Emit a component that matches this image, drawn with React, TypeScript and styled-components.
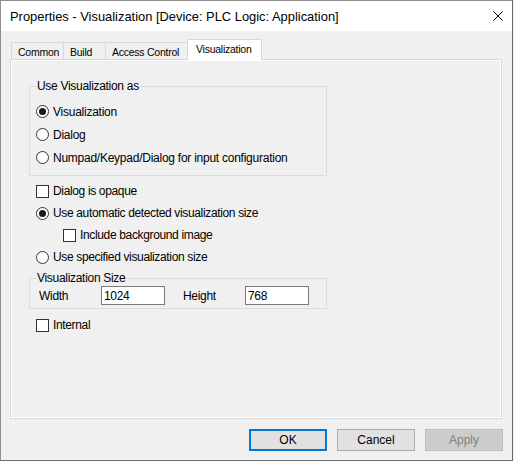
import React from 'react';
import styled, { createGlobalStyle } from 'styled-components';

const Global = createGlobalStyle`
  html, body { margin: 0; padding: 0; background: #f0f0f0; }
  body {
    font-family: "Liberation Sans", Arial, sans-serif;
    font-size: 12px;
    color: #000;
  }
  * { box-sizing: border-box; }
`;

const Window = styled.div`
  width: 513px;
  height: 461px;
  border: 1px solid #8f8f8f;
  border-right-color: #6b6b6b;
  border-bottom-color: #6b6b6b;
  background: #f0f0f0;
  display: flex;
  flex-direction: column;
`;

const TitleBar = styled.div`
  height: 30px;
  background: #fff;
  display: flex;
  align-items: center;
  justify-content: space-between;
  padding: 0 9px 0 9px;
  flex: none;
`;

const Title = styled.span`
  font-size: 12.9px;
  padding-top: 1px;
`;

const CloseButton = styled.span`
  display: flex;
  width: 10px;
  height: 10px;
`;

const Body = styled.div`
  flex: none;
  padding: 8px 10px 0 9px;
  display: flex;
  flex-direction: column;
`;

const TabStrip = styled.div`
  height: 20px;
  display: flex;
  align-items: flex-end;
  padding-left: 1px;
`;

const Tab = styled.div<{ $active?: boolean; $w: number }>`
  flex: none;
  width: ${(p) => p.$w}px;
  height: ${(p) => (p.$active ? '21px' : '17px')};
  margin-left: -1px;
  margin-right: ${(p) => (p.$active ? '-2px' : '0')};
  margin-bottom: ${(p) => (p.$active ? '-1px' : '0')};
  position: relative;
  z-index: ${(p) => (p.$active ? 2 : 1)};
  padding: ${(p) => (p.$active ? '0 0 3px 8px' : '1px 0 0 6px')};
  border: 1px solid #d9d9d9;
  border-bottom: none;
  background: ${(p) => (p.$active ? '#fff' : '#f0f0f0')};
  display: flex;
  align-items: center;
  white-space: nowrap;
  font-size: 10.5px;
  letter-spacing: -0.25px;
  &:first-child { margin-left: 0; }
`;

const Panel = styled.div`
  height: 360px;
  border: 1px solid #d9d9d9;
  box-shadow: inset 0 0 0 1px #fff;
  background: #f0f0f0;
  padding: 19px 0 0 18px;
  display: flex;
  flex-direction: column;
  align-items: flex-start;
`;

const Group = styled.fieldset<{ $padBottom: number; $mt?: number }>`
  margin: ${(p) => p.$mt ?? 0}px 0 0 0;
  width: 298px;
  border: 1px solid #dcdcdc;
  padding: 0 0 ${(p) => p.$padBottom}px 6px;
  min-width: 0;
`;

const Legend = styled.legend`
  padding: 0 1px;
  margin-left: 0;
  line-height: 14px;
  height: 14px;
  letter-spacing: -0.3px;
`;

const GroupBody = styled.div<{ $pt: number }>`
  padding-top: ${(p) => p.$pt}px;
  display: flex;
  flex-direction: column;
`;

const Rows = styled.div<{ $mt: number }>`
  margin: ${(p) => p.$mt}px 0 0 7px;
  display: flex;
  flex-direction: column;
  width: 300px;
`;

const Row = styled.label<{ $h: number; $indent?: number; $tight?: boolean }>`
  height: ${(p) => p.$h}px;
  margin-left: ${(p) => p.$indent ?? 0}px;
  display: flex;
  align-items: center;
  gap: 4px;
  white-space: nowrap;
  letter-spacing: ${(p) => (p.$tight ? '-0.35px' : '-0.25px')};
`;

const Radio = styled.span<{ $checked?: boolean }>`
  width: 13px;
  height: 13px;
  border-radius: 50%;
  border: 1px solid #333;
  background: #fff;
  flex: none;
  display: flex;
  align-items: center;
  justify-content: center;
  &::after {
    content: '';
    width: 7px;
    height: 7px;
    border-radius: 50%;
    background: #1a1a1a;
    display: ${(p) => (p.$checked ? 'block' : 'none')};
  }
`;

const Check = styled.span`
  width: 13px;
  height: 13px;
  border: 1px solid #333;
  background: #fff;
  flex: none;
`;

const SizeRow = styled.div`
  height: 21px;
  display: flex;
  align-items: center;
  padding-left: 3px;
  letter-spacing: -0.3px;
`;

const FieldLabel = styled.span`
  width: 62px;
  flex: none;
`;

const Input = styled.div`
  width: 64px;
  height: 19px;
  border: 1px solid #7a7a7a;
  background: #fff;
  padding-left: 2px;
  display: flex;
  align-items: center;
  margin-right: 18px;
  flex: none;
`;

const Footer = styled.div`
  flex: none;
  display: flex;
  justify-content: flex-end;
  gap: 10px;
  padding: 10px 9px 0 0;
`;

const Button = styled.button<{ $variant?: 'default' | 'normal' | 'disabled' }>`
  width: 78px;
  height: 22px;
  margin: 0;
  font-family: inherit;
  font-size: 12px;
  padding: 0;
  color: ${(p) => (p.$variant === 'disabled' ? '#838383' : '#000')};
  background: ${(p) => (p.$variant === 'disabled' ? '#cccccc' : '#e1e1e1')};
  border: ${(p) =>
    p.$variant === 'default'
      ? '2px solid #0078d7'
      : p.$variant === 'disabled'
      ? '1px solid #bfbfbf'
      : '1px solid #adadad'};
`;

export default function App() {
  return (
    <>
      <Global />
      <Window>
        <TitleBar>
          <Title>Properties - Visualization [Device: PLC Logic: Application]</Title>
          <CloseButton>
            <svg width="10" height="10" viewBox="0 0 10 10">
              <path d="M0.5 0.5 L9.5 9.5 M9.5 0.5 L0.5 9.5" stroke="#000" strokeWidth="1" fill="none" />
            </svg>
          </CloseButton>
        </TitleBar>
        <Body>
          <TabStrip>
            <Tab $w={53}>Common</Tab>
            <Tab $w={43}>Build</Tab>
            <Tab $w={83}>Access Control</Tab>
            <Tab $w={75} $active>Visualization</Tab>
          </TabStrip>
          <Panel>
            <Group $padBottom={6}>
              <Legend>Use Visualization as</Legend>
              <GroupBody $pt={7}>
                <Row $h={23}><Radio $checked />Visualization</Row>
                <Row $h={23}><Radio />Dialog</Row>
                <Row $h={23}><Radio />Numpad/Keypad/Dialog for input configuration</Row>
              </GroupBody>
            </Group>
            <Rows $mt={4}>
              <Row $h={22} $tight><Check />Dialog is opaque</Row>
              <Row $h={22} $tight><Radio $checked />Use automatic detected visualization size</Row>
              <Row $h={22} $tight $indent={27}><Check />Include background image</Row>
              <Row $h={22} $tight><Radio />Use specified visualization size</Row>
            </Rows>
            <Group $padBottom={2} $mt={3}>
              <Legend>Visualization Size</Legend>
              <GroupBody $pt={0}>
                <SizeRow>
                  <FieldLabel>Width</FieldLabel>
                  <Input>1024</Input>
                  <FieldLabel>Height</FieldLabel>
                  <Input>768</Input>
                </SizeRow>
              </GroupBody>
            </Group>
            <Rows $mt={5}>
              <Row $h={22} $tight><Check />Internal</Row>
            </Rows>
          </Panel>
        </Body>
        <Footer>
          <Button $variant="default">OK</Button>
          <Button $variant="normal">Cancel</Button>
          <Button $variant="disabled">Apply</Button>
        </Footer>
      </Window>
    </>
  );
}
